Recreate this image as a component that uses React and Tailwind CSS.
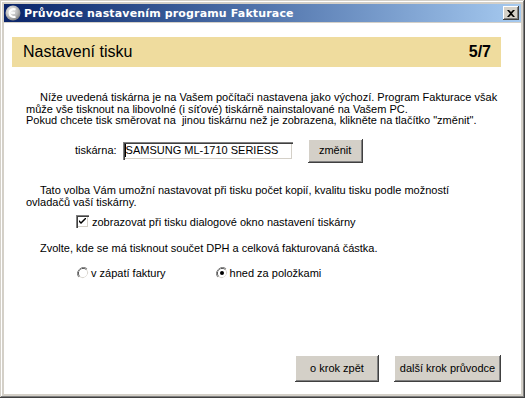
import React from "react";

const btn =
  "bg-[#d4d0c8] shadow-[inset_-1px_-1px_0_#404040,inset_1px_1px_0_#ffffff,inset_-2px_-2px_0_#808080,inset_2px_2px_0_#d4d0c8] flex items-center justify-center text-black";

function TitleIcon() {
  return (
    <svg width="16" height="16" viewBox="0 0 16 16">
      <defs>
        <radialGradient id="g1" cx="40%" cy="35%" r="70%">
          <stop offset="0%" stopColor="#f4f4f4" />
          <stop offset="60%" stopColor="#b8b8b8" />
          <stop offset="100%" stopColor="#7a7a7a" />
        </radialGradient>
      </defs>
      <circle cx="8" cy="8" r="7.5" fill="url(#g1)" />
      <path d="M10.5 4.5 A4 4 0 1 0 10.5 11.5" fill="none" stroke="#ffffff" strokeWidth="2" />
      <path d="M6 8 H10" stroke="#ffffff" strokeWidth="1.6" />
    </svg>
  );
}

function Checkbox() {
  return (
    <div className="w-[13px] h-[13px] bg-white shadow-[inset_1px_1px_0_#808080,inset_2px_2px_0_#404040,inset_-1px_-1px_0_#ffffff,inset_-2px_-2px_0_#d4d0c8] flex items-center justify-center">
      <svg width="7" height="7" viewBox="0 0 7 7">
        <path d="M0 2 L0 4 L2 6 L7 1 L7 -1 L2 4 Z" fill="#000" />
      </svg>
    </div>
  );
}

function Radio({ checked }) {
  return (
    <svg width="12" height="12" viewBox="0 0 12 12">
      <path d="M10.2 1.8 A6 6 0 0 0 1.8 10.2" fill="none" stroke="#808080" strokeWidth="1" />
      <path d="M9.5 2.5 A5 5 0 0 0 2.5 9.5" fill="none" stroke="#404040" strokeWidth="1" />
      <path d="M1.8 10.2 A6 6 0 0 0 10.2 1.8" fill="none" stroke="#ffffff" strokeWidth="1" />
      <path d="M2.5 9.5 A5 5 0 0 0 9.5 2.5" fill="none" stroke="#d4d0c8" strokeWidth="1" />
      <circle cx="6" cy="6" r="4" fill="#ffffff" />
      {checked && <circle cx="6" cy="6" r="2" fill="#000" />}
    </svg>
  );
}

export default function App() {
  return (
    <div
      className="w-[525px] h-[398px] bg-[#d4d0c8] shadow-[inset_-1px_-1px_0_#404040,inset_1px_1px_0_#d4d0c8,inset_-2px_-2px_0_#808080,inset_2px_2px_0_#ffffff] p-[4px] pb-[4px] flex flex-col text-[11px] text-black"
      style={{ fontFamily: '"Liberation Sans", Arial, sans-serif' }}
    >
      {/* title bar */}
      <div className="h-[18px] bg-gradient-to-r from-[#0a246a] to-[#a6caf0] flex items-center pl-[1px] pr-[2px]">
        <TitleIcon />
        <div className="ml-[3px] text-white font-bold text-[11px] leading-none tracking-[0.15px]" style={{ fontFamily: '"DejaVu Sans", Tahoma, sans-serif' }}>
          <span className="text-[11px]">Průvodce nastavením programu Fakturace</span>
        </div>
        <div className={"ml-auto w-[16px] h-[14px] " + btn}>
          <svg width="8" height="7" viewBox="0 0 8 7">
            <path d="M0 0 L2 0 L4 2 L6 0 L8 0 L5 3.5 L8 7 L6 7 L4 5 L2 7 L0 7 L3 3.5 Z" fill="#000" />
          </svg>
        </div>
      </div>
      {/* client */}
      <div className="mt-[1px] flex-1 bg-white flex flex-col px-[8px] pt-[14px] pb-[12px]">
        <div className="h-[30px] w-[489px] bg-[#efdc9e] flex items-center justify-between pl-[11px] pr-[10px] text-[16px]">
          <span>Nastavení tisku</span>
          <span className="font-bold">5/7</span>
        </div>
        <div className="mt-[25px] ml-[14px] leading-[11.5px]">
          <div className="indent-[14px]">
            Níže uvedená tiskárna je na Vašem počítači nastavena jako výchozí. Program Fakturace však
            <br />
            může vše tisknout na libovolné (i síťové) tiskárně nainstalované na Vašem PC.
          </div>
          <div>Pokud chcete tisk směrovat na&nbsp; jinou tiskárnu než je zobrazena, klikněte na tlačítko "změnit".</div>
        </div>
        <div className="mt-[12px] ml-[63px] flex items-center">
          <span>tiskárna:</span>
          <div className="ml-[6px] w-[170px] h-[18px] bg-white shadow-[inset_1px_1px_0_#808080,inset_2px_2px_0_#404040,inset_-1px_-1px_0_#ffffff,inset_-2px_-2px_0_#d4d0c8] flex items-center pl-[2px]">
            <span className="w-[1px] h-[13px] bg-black"></span>
            <span className="text-[11px]">SAMSUNG ML-1710 SERIESS</span>
          </div>
          <div className={"ml-[15px] w-[55px] h-[24px] text-[11px] " + btn}>změnit</div>
        </div>
        <div className="mt-[21px] ml-[14px] leading-[12.5px]">
          <div className="indent-[14px]">
            Tato volba Vám umožní nastavovat při tisku počet kopií, kvalitu tisku podle možností
            <br />
            ovladačů vaší tiskárny.
          </div>
        </div>
        <div className="mt-[5px] ml-[64px] flex items-center gap-[3px]">
          <Checkbox />
          <span>zobrazovat při tisku dialogové okno nastavení tiskárny</span>
        </div>
        <div className="mt-[10px] ml-[28px]">Zvolte, kde se má tisknout součet DPH a celková fakturovaná částka.</div>
        <div className="mt-[8px] ml-[65px] flex items-center">
          <Radio />
          <span className="ml-[2px]">v zápatí faktury</span>
          <div className="ml-[50px] flex items-center">
            <Radio checked />
            <span className="ml-[2px]">hned za položkami</span>
          </div>
        </div>
        <div className="mt-auto flex justify-end gap-[15px] pr-[12px]">
          <div className={"w-[84px] h-[27px] text-[11px] " + btn}>o krok zpět</div>
          <div className={"w-[107px] h-[27px] text-[11px] " + btn}>další krok průvodce</div>
        </div>
      </div>
    </div>
  );
}
